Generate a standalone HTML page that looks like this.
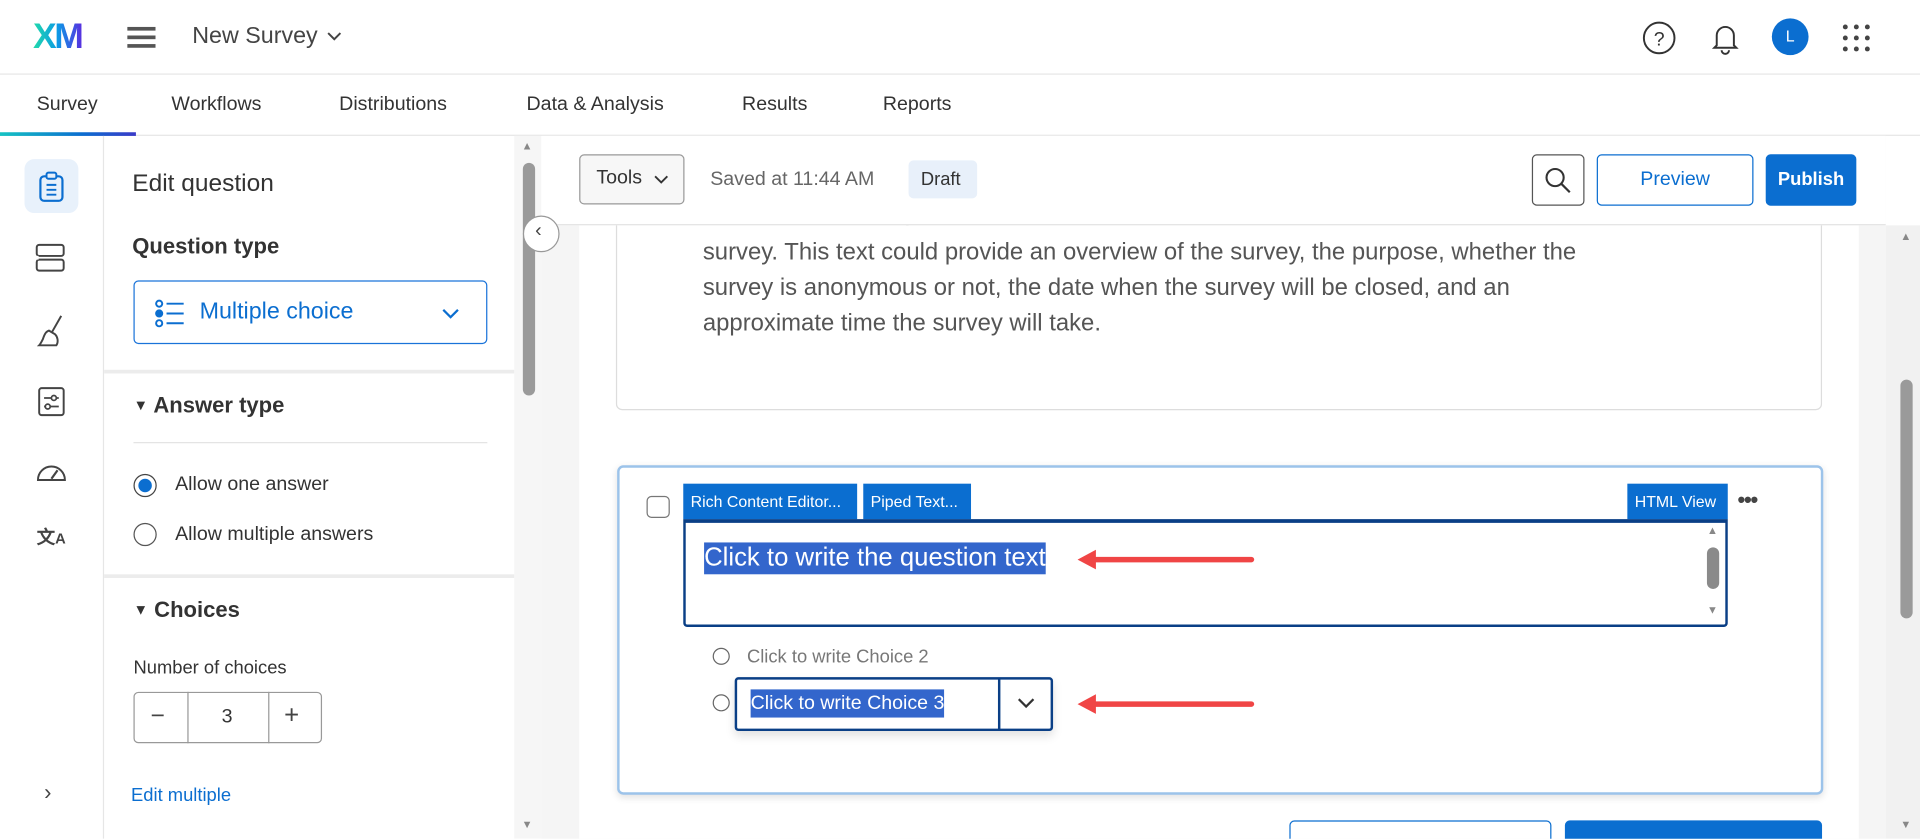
<!DOCTYPE html>
<html><head><meta charset="utf-8"><style>
*{box-sizing:border-box;margin:0;padding:0}
body{width:1920px;height:839px;overflow:hidden;background:#fff;font-family:"Liberation Sans",Arial,sans-serif;color:#333}
#w{position:absolute;left:0;top:0;width:1568px;height:685px;transform:scale(1.22449);transform-origin:0 0;overflow:hidden}
.a{position:absolute}
.t{position:absolute;white-space:nowrap}
</style></head><body><div id="w">
<!-- header -->
<div class="t" style="left:27px;top:14px;font-size:29px;font-weight:bold;letter-spacing:-2px;background:linear-gradient(90deg,#21dbaa,#0b9ae6 50%,#5a2ee0);-webkit-background-clip:text;color:transparent">XM</div>
<div class="a" style="left:104px;top:22px;width:23px;height:2.5px;background:#555;box-shadow:0 7px 0 #555,0 14px 0 #555"></div>
<div class="t" style="left:157px;top:19px;font-size:19px;color:#444">New Survey</div>
<svg class="a" style="left:266px;top:25px" width="14" height="10"><path d="M2 2l5 5 5-5" stroke="#444" stroke-width="1.6" fill="none"/></svg>
<svg class="a" style="left:1340px;top:16px" width="30" height="30"><circle cx="15" cy="15" r="12.5" stroke="#333" stroke-width="1.6" fill="none"/><text x="15" y="21" font-size="16" text-anchor="middle" fill="#333" font-family="Liberation Sans">?</text></svg>
<svg class="a" style="left:1395px;top:16px" width="28" height="30"><path d="M7 21V13a7 7 0 0 1 14 0v8l2 2H5z" stroke="#333" stroke-width="1.6" fill="none"/><path d="M11 25a3 3 0 0 0 6 0" stroke="#333" stroke-width="1.6" fill="none"/></svg>
<div class="a" style="left:1447px;top:15px;width:30px;height:30px;border-radius:50%;background:#0b6ed0;color:#fff;font-size:13px;text-align:center;line-height:30px">L</div>
<svg class="a" style="left:1504px;top:19px" width="24" height="24"><g fill="#444"><circle cx="3" cy="3" r="2"/><circle cx="12" cy="3" r="2"/><circle cx="21" cy="3" r="2"/><circle cx="3" cy="12" r="2"/><circle cx="12" cy="12" r="2"/><circle cx="21" cy="12" r="2"/><circle cx="3" cy="21" r="2"/><circle cx="12" cy="21" r="2"/><circle cx="21" cy="21" r="2"/></g></svg>
<div class="a" style="left:0;top:60px;width:1568px;height:1px;background:#e6e6e6"></div>
<!-- tabs -->
<div class="t" style="left:30px;top:77px;font-size:16px">Survey</div>
<div class="t" style="left:140px;top:77px;font-size:16px">Workflows</div>
<div class="t" style="left:277px;top:77px;font-size:16px">Distributions</div>
<div class="t" style="left:430px;top:77px;font-size:16px">Data &amp; Analysis</div>
<div class="t" style="left:606px;top:77px;font-size:16px">Results</div>
<div class="t" style="left:721px;top:77px;font-size:16px">Reports</div>
<div class="a" style="left:0;top:110px;width:1568px;height:1px;background:#e6e6e6"></div>
<div class="a" style="left:0;top:108px;width:111px;height:3px;background:linear-gradient(90deg,#15c3c3,#0b6ed0 60%,#3a3ac8)"></div>
<!-- rail -->
<div class="a" style="left:84px;top:111px;width:1px;height:574px;background:#e6e6e6"></div>
<div class="a" style="left:20px;top:130px;width:44px;height:44px;border-radius:8px;background:#e8f1fb"></div>
<svg class="a" style="left:30px;top:140px" width="24" height="26"><rect x="3" y="4" width="18" height="20" rx="3" stroke="#0b6ed0" stroke-width="1.8" fill="none"/><rect x="8" y="1" width="8" height="5" rx="1.5" stroke="#0b6ed0" stroke-width="1.6" fill="#e8f1fb"/><path d="M8 11h8M8 15h8M8 19h8" stroke="#0b6ed0" stroke-width="1.6"/></svg>
<svg class="a" style="left:28px;top:198px" width="28" height="26"><rect x="2" y="2" width="22" height="9" rx="2" stroke="#444" stroke-width="1.6" fill="none"/><rect x="2" y="14" width="22" height="9" rx="2" stroke="#444" stroke-width="1.6" fill="none"/><path d="M2 11v3" stroke="#fff" stroke-width="3"/></svg>
<svg class="a" style="left:30px;top:256px" width="26" height="28"><path d="M20 2l-8 14M10 14c-3 1-4 4-5 7-1 2-2 4-3 5h14c2-3 1-7-1-9z" stroke="#444" stroke-width="1.6" fill="none"/></svg>
<svg class="a" style="left:30px;top:315px" width="24" height="26"><rect x="2" y="2" width="20" height="22" rx="2" stroke="#444" stroke-width="1.6" fill="none"/><path d="M6 10h12M6 17h12" stroke="#444" stroke-width="1.4"/><circle cx="14" cy="10" r="2" fill="#fff" stroke="#444" stroke-width="1.4"/><circle cx="9" cy="17" r="2" fill="#fff" stroke="#444" stroke-width="1.4"/></svg>
<svg class="a" style="left:28px;top:374px" width="28" height="22"><path d="M3 18a11 11 0 0 1 22 0z" stroke="#444" stroke-width="1.6" fill="none"/><path d="M14 17l5-7" stroke="#444" stroke-width="1.8"/></svg>
<div class="t" style="left:30px;top:428px;font-size:15px;color:#444;font-weight:bold">文<span style="font-size:12px">A</span></div>
<div class="t" style="left:36px;top:637px;font-size:18px;color:#444">›</div>
<!-- panel -->
<div class="t" style="left:108px;top:139px;font-size:20px;color:#333">Edit question</div>
<div class="t" style="left:108px;top:191px;font-size:18px;font-weight:bold">Question type</div>
<div class="a" style="left:109px;top:229px;width:289px;height:52px;border:1px solid #1a73d9;border-radius:4px"></div>
<svg class="a" style="left:126px;top:244px" width="26" height="24"><g stroke="#0b6ed0" stroke-width="1.6" fill="none"><circle cx="4" cy="4" r="2.5"/><circle cx="4" cy="12" r="2.5"/><circle cx="4" cy="20" r="2.5"/><path d="M10 4h14M10 12h14M10 20h14"/></g><circle cx="4" cy="12" r="2.5" fill="#0b6ed0"/></svg>
<div class="t" style="left:163px;top:244px;font-size:19px;color:#0b6ed0">Multiple choice</div>
<svg class="a" style="left:360px;top:250px" width="16" height="12"><path d="M2 3l6 6 6-6" stroke="#0b6ed0" stroke-width="1.8" fill="none"/></svg>
<div class="a" style="left:85px;top:302px;width:335px;height:3px;background:#ececec"></div>
<div class="t" style="left:109px;top:321px;font-size:18px;font-weight:bold"><span style="font-size:12px;vertical-align:2px">▼</span> Answer type</div>
<div class="a" style="left:109px;top:361px;width:289px;height:1px;background:#e3e3e3"></div>
<div class="a" style="left:109px;top:387px;width:19px;height:19px;border-radius:50%;border:1.5px solid #444"></div>
<div class="a" style="left:113px;top:391px;width:11px;height:11px;border-radius:50%;background:#0b6ed0"></div>
<div class="t" style="left:143px;top:387px;font-size:16px">Allow one answer</div>
<div class="a" style="left:109px;top:427px;width:19px;height:19px;border-radius:50%;border:1.5px solid #555"></div>
<div class="t" style="left:143px;top:428px;font-size:16px">Allow multiple answers</div>
<div class="a" style="left:85px;top:469px;width:335px;height:3px;background:#ececec"></div>
<div class="t" style="left:109px;top:488px;font-size:18px;font-weight:bold"><span style="font-size:12px;vertical-align:2px">▼</span> Choices</div>
<div class="t" style="left:109px;top:537px;font-size:15px">Number of choices</div>
<div class="a" style="left:109px;top:565px;width:154px;height:42px;border:1px solid #999;border-radius:4px"></div>
<div class="a" style="left:153px;top:565px;width:1px;height:42px;background:#999"></div>
<div class="a" style="left:219px;top:565px;width:1px;height:42px;background:#999"></div>
<div class="t" style="left:123px;top:574px;font-size:20px;color:#444">−</div>
<div class="t" style="left:181px;top:577px;font-size:16px">3</div>
<div class="t" style="left:232px;top:573px;font-size:21px;color:#444">+</div>
<div class="t" style="left:107px;top:641px;font-size:15px;color:#0b6ed0">Edit multiple</div>
<!-- panel scrollbar -->
<div class="a" style="left:420px;top:111px;width:22px;height:574px;background:#f6f6f6"></div>
<div class="a" style="left:427px;top:133px;width:10px;height:190px;border-radius:5px;background:#9a9a9a"></div>
<div class="t" style="left:426px;top:114px;font-size:9px;color:#888">▲</div>
<div class="t" style="left:426px;top:668px;font-size:9px;color:#888">▼</div>
<!-- main -->
<div class="a" style="left:442px;top:111px;width:1098px;height:574px;background:#f5f5f5"></div>
<div class="a" style="left:473px;top:184px;width:1045px;height:501px;background:#fff"></div>
<!-- content card -->
<div class="a" style="left:503px;top:150px;width:985px;height:185px;border:1px solid #ddd;border-radius:5px;background:#fff"></div>
<div class="a" style="left:574px;top:192px;font-size:19.5px;line-height:29px;color:#555;white-space:nowrap">
<div>survey. This text could provide an overview of the survey, the purpose, whether the</div>
<div>survey is anonymous or not, the date when the survey will be closed, and an</div>
<div>approximate time the survey will take.</div></div>
<div class="a" style="left:740px;top:178px;width:2px;height:6px;background:#555"></div>
<!-- toolbar -->
<div class="a" style="left:442px;top:111px;width:1098px;height:73px;background:#fff;border-bottom:1px solid #e3e3e3"></div>
<div class="a" style="left:473px;top:126px;width:86px;height:41px;border:1px solid #999;border-radius:4px;background:#f7f7f7"></div>
<div class="t" style="left:487px;top:137px;font-size:16px">Tools</div>
<svg class="a" style="left:533px;top:142px" width="14" height="10"><path d="M2 2l5 5 5-5" stroke="#333" stroke-width="1.5" fill="none"/></svg>
<div class="t" style="left:580px;top:138px;font-size:16px;color:#666">Saved at 11:44 AM</div>
<div class="a" style="left:742px;top:131px;width:56px;height:31px;border-radius:4px;background:#e8f0fa"></div>
<div class="t" style="left:752px;top:138px;font-size:15px">Draft</div>
<div class="a" style="left:1251px;top:126px;width:43px;height:42px;border:1px solid #555;border-radius:4px"></div>
<svg class="a" style="left:1261px;top:136px" width="24" height="24"><circle cx="9" cy="9" r="7" stroke="#333" stroke-width="1.7" fill="none"/><path d="M14 14l7 7" stroke="#333" stroke-width="1.8"/></svg>
<div class="a" style="left:1304px;top:126px;width:128px;height:42px;border:1px solid #0b6ed0;border-radius:4px;color:#0b6ed0;font-size:16px;text-align:center;line-height:40px">Preview</div>
<div class="a" style="left:1442px;top:126px;width:74px;height:42px;border-radius:4px;background:#0b6ed0;color:#fff;font-size:15px;font-weight:bold;text-align:center;line-height:42px">Publish</div>
<div class="a" style="left:427px;top:176px;width:30px;height:30px;border-radius:50%;border:1px solid #999;background:#fff"></div>
<div class="t" style="left:437px;top:180px;font-size:16px;color:#444">‹</div>
<!-- question card -->
<div class="a" style="left:504px;top:380px;width:985px;height:269px;border:2px solid #9cc3ea;border-radius:5px;background:#fff;box-shadow:0 2px 6px rgba(0,0,0,.12)"></div>
<div class="a" style="left:528px;top:405px;width:19px;height:18px;border:1.3px solid #777;border-radius:4px"></div>
<div class="a" style="left:558px;top:395px;width:142px;height:29px;background:#0b6ed0"></div>
<div class="t" style="left:564px;top:402px;font-size:13px;color:#fff">Rich Content Editor...</div>
<div class="a" style="left:705px;top:395px;width:88px;height:29px;background:#0b6ed0"></div>
<div class="t" style="left:711px;top:402px;font-size:13px;color:#fff">Piped Text...</div>
<div class="a" style="left:1329px;top:395px;width:82px;height:29px;background:#0b6ed0"></div>
<div class="t" style="left:1335px;top:402px;font-size:13px;color:#fff">HTML View</div>
<div class="t" style="left:1419px;top:398px;font-size:18px;color:#444;font-weight:bold;letter-spacing:-1px">•••</div>
<div class="a" style="left:558px;top:424px;width:853px;height:88px;border:2px solid #0a3f86;border-top-width:3px;border-radius:0 0 3px 3px;background:#fff"></div>
<div class="t" style="left:575px;top:443px;height:26px;line-height:26px;font-size:21px;color:#fff;background:#3366cc">Click to write the question text</div>
<div class="t" style="left:1394px;top:428px;font-size:9px;color:#888">▲</div>
<div class="a" style="left:1394px;top:447px;width:10px;height:34px;border-radius:5px;background:#8a8a8a"></div>
<div class="t" style="left:1394px;top:493px;font-size:9px;color:#888">▼</div>
<svg class="a" style="left:878px;top:446px" width="150" height="22"><path d="M12 11h132" stroke="#f04545" stroke-width="4.5" stroke-linecap="round"/><path d="M2 11l15-8v16z" fill="#f04545"/></svg>
<div class="a" style="left:582px;top:529px;width:14px;height:14px;border-radius:50%;border:1.3px solid #666"></div>
<div class="t" style="left:610px;top:528px;font-size:15px;color:#777">Click to write Choice 2</div>
<div class="a" style="left:582px;top:567px;width:14px;height:14px;border-radius:50%;border:1.3px solid #666"></div>
<div class="a" style="left:600px;top:553px;width:260px;height:44px;border:2px solid #0a3f86;border-radius:3px;background:#fff;box-shadow:0 4px 8px rgba(0,0,0,.12)"></div>
<div class="a" style="left:815px;top:554px;width:2px;height:42px;background:#0a3f86"></div>
<svg class="a" style="left:830px;top:569px" width="16" height="11"><path d="M2 2l6 6 6-6" stroke="#333" stroke-width="1.8" fill="none"/></svg>
<div class="t" style="left:613px;top:563px;height:23px;line-height:23px;font-size:16px;color:#fff;background:#3366cc">Click to write Choice 3</div>
<svg class="a" style="left:878px;top:564px" width="150" height="22"><path d="M12 11h132" stroke="#f04545" stroke-width="4.5" stroke-linecap="round"/><path d="M2 11l15-8v16z" fill="#f04545"/></svg>
<!-- bottom buttons -->
<div class="a" style="left:1053px;top:670px;width:214px;height:30px;border:1px solid #0b6ed0;border-radius:4px;background:#fff"></div>
<div class="a" style="left:1278px;top:670px;width:210px;height:30px;border-radius:4px;background:#0b6ed0"></div>
<!-- right scrollbar -->
<div class="a" style="left:1540px;top:184px;width:28px;height:501px;background:#f1f1f1"></div>
<div class="a" style="left:1552px;top:310px;width:10px;height:195px;border-radius:5px;background:#9a9a9a"></div>
<div class="t" style="left:1552px;top:188px;font-size:9px;color:#888">▲</div>
<div class="t" style="left:1552px;top:668px;font-size:9px;color:#888">▼</div>
</div></body></html>
